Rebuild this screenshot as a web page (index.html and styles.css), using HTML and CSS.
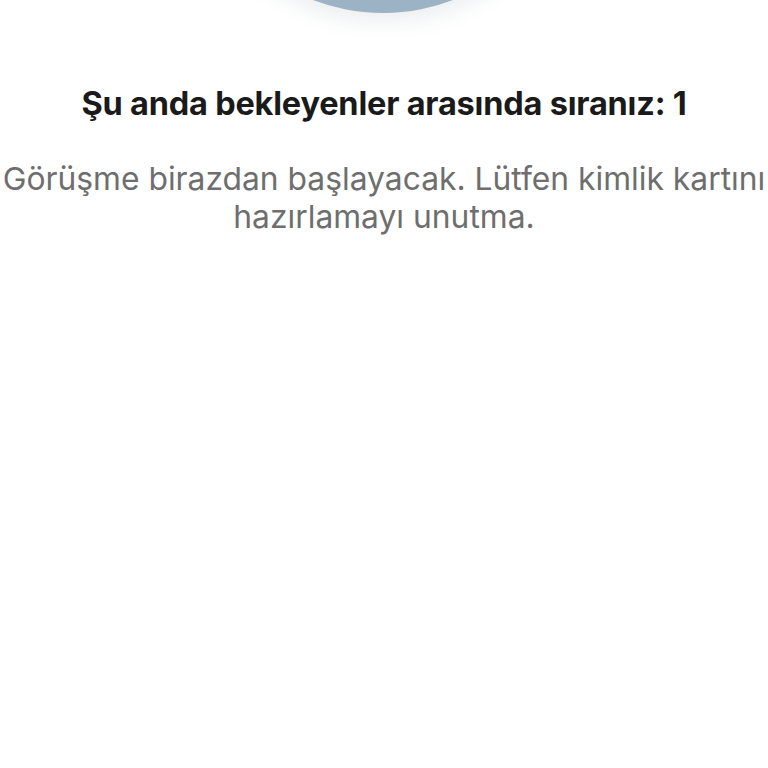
FILE: index.html
```html
<!DOCTYPE html>
<html lang="tr">
<head>
<meta charset="utf-8">
<link rel="stylesheet" href="styles.css">
</head>
<body>
<div class="page">
  <div class="avatar-wrap"><div class="avatar"></div></div>
  <h1 class="title">Şu anda bekleyenler arasında sıranız: 1</h1>
  <p class="subtitle">Görüşme birazdan başlayacak. Lütfen kimlik kartını hazırlamayı unutma.</p>
</div>
</body>
</html>
```

FILE: styles.css
```css
html, body {
  margin: 0;
  padding: 0;
  background: #ffffff;
}
.page {
  width: 768px;
  height: 768px;
  overflow: hidden;
  display: flex;
  flex-direction: column;
  align-items: center;
  font-family: Inter, "Noto Sans", sans-serif;
}
.avatar-wrap {
  height: 13px;
  width: 100%;
  display: flex;
  justify-content: center;
  align-items: flex-end;
}
.avatar {
  flex: none;
  width: 390px;
  height: 390px;
  border-radius: 50%;
  background: #9cb2c5;
  box-shadow: 0 6px 24px rgba(60, 80, 100, 0.12);
  margin-left: -3px;
}
.title {
  margin: 71px 0 0;
  font-size: 32.5px;
  font-weight: 700;
  color: #1a1a1a;
  letter-spacing: -0.2px;
  line-height: 40px;
  text-align: center;
  white-space: nowrap;
}
.subtitle {
  margin: 36px 0 0;
  font-size: 31.8px;
  font-weight: 400;
  color: #6e6e6e;
  line-height: 38px;
  text-align: center;
  width: 768px;
}
```
